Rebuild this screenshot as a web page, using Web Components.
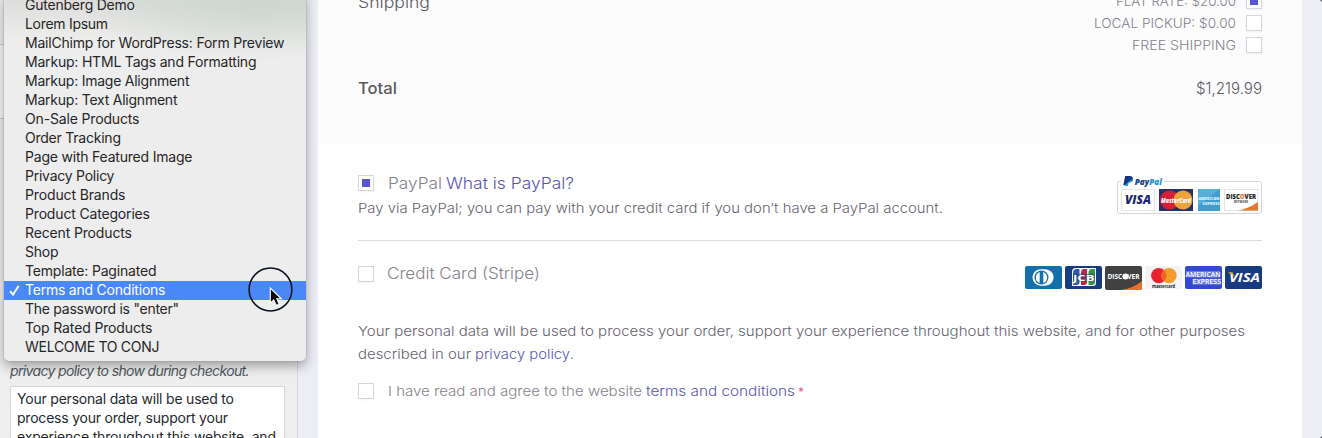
<!DOCTYPE html>
<html lang="en">
<head>
<meta charset="utf-8">
<title>Checkout customizer</title>
<style>
html,body{margin:0;height:100%;overflow:hidden;background:#ededf5}
body{font-family:Inter,sans-serif}
</style>
</head>
<body>
<customizer-app></customizer-app>
<script>
const define=(name,html,setup)=>customElements.define(name,class extends HTMLElement{
  constructor(){super();this.attachShadow({mode:'open'}).innerHTML=html;}
  connectedCallback(){if(setup)setup.call(this,this.shadowRoot);}
});

// A single line of text set to a given width: widened where --stretch is on, tracked otherwise.
define('fit-text','<style>:host{display:inline-block;white-space:pre}span{display:inline-block;transform-origin:0 50%}</style><span><slot></slot></span>',function(root){
  const s=root.querySelector('span'),w=+this.getAttribute('w'),n=this.textContent.length;
  const own=s.getBoundingClientRect().width;
  if(getComputedStyle(this).getPropertyValue('--stretch').trim()==='1')s.style.transform='scaleX('+w/own+')';
  else s.style.letterSpacing=((w-own)/(n-1))+'px';
  this.style.width=w+'px';
});

define('check-box',`<style>
:host{display:block;box-sizing:border-box;width:16px;height:16px;flex:none;border:1px solid #d5d4df;background:#fff;box-shadow:0 1px 2px #0000000d;padding:3px}
i{display:none;width:8px;height:8px;background:#5856d0}
:host([checked]) i{display:block}
</style><i></i>`);

define('menu-item',`<style>
:host{display:flex;align-items:center;height:19px;padding-left:21px;position:relative;font:14px/19px Inter,sans-serif;color:#262628;white-space:pre}
:host([selected]){background:#4a88f7;color:#fff}
svg{display:none;position:absolute;left:5px;top:4px}
:host([selected]) svg{display:block}
fit-text,::slotted(*){margin-top:-2px}
</style><svg width="11" height="11" viewBox="0 0 11 11"><path d="M1 6.2 4 9.6 9.6 1" fill="none" stroke="#fff" stroke-width="1.9"/></svg><slot></slot>`);

const items=[['Gutenberg Demo',110],['Lorem Ipsum',83],['MailChimp for WordPress: Form Preview',259.5],['Markup: HTML Tags and Formatting',231.5],['Markup: Image Alignment',164.5],['Markup: Text Alignment',152.5],['On-Sale Products',114.5],['Order Tracking',96],['Page with Featured Image',167.5],['Privacy Policy',89.5],['Product Brands',100.5],['Product Categories',125],['Recent Products',107],['Shop',33.5],['Template: Paginated',131.5],['Terms and Conditions',140.5],['The password is "enter"',154],['Top Rated Products',127.5],['WELCOME TO CONJ',134.5]];
define('page-menu',`<style>
:host{display:block;box-sizing:border-box;width:302px;height:365px;padding-bottom:4px;overflow:hidden;border-radius:0 0 5px 5px;background:radial-gradient(ellipse 190px 66px at 255px 0,#cbd5cd 0,#cbd5cd00 100%),linear-gradient(#dcdcdb,#ededec 46px,#ededee 70px)}
</style>${items.map(([t,w])=>`<menu-item${t.startsWith('Terms')?' selected':''}><fit-text w="${w}">${t}</fit-text></menu-item>`).join('')}`);

define('mouse-pointer',`<style>:host{display:block;width:46px;height:46px}svg{display:block}</style>
<svg width="46" height="46" viewBox="0 0 46 46"><circle cx="23.500" cy="23.500" r="21.400" fill="none" stroke="#07101f" stroke-width="1.500"/><path d="M23.300 22V37.100L26.700 34 29.400 39.500 32.200 38.200 29.800 32.800H34.300Z" fill="#050505" stroke="#fff" stroke-width="1.100"/></svg>`);

define('side-panel',`<style>
:host{display:flex;flex-direction:column;box-sizing:border-box;width:298px;height:438px;background:#eee;border-right:1px solid #d5d5dc;padding:361px 0 0 10px;position:relative;color:#26292d;font:14px/19px Inter,sans-serif}
em{display:block;color:#50555a;height:19px;margin-bottom:6px}
.area{box-sizing:border-box;width:275px;height:70px;border:1px solid #d8d8d8;background:#fff;padding:2px 6px;white-space:nowrap}
.area div{height:19px}
.control{position:absolute;left:0;top:44px;width:6px;height:75px;box-sizing:border-box;background:#f7f7f7;border:solid #c8c8c8;border-width:1px 0}
page-menu{position:absolute;left:4px;top:-4px;z-index:1}
.shade{position:absolute;left:4px;top:-8px;width:302px;height:369px;border-radius:5px;box-shadow:0 0 1px #0008,0 5px 12px #0005}
mouse-pointer{position:absolute;left:247px;top:266px;z-index:2}
</style><em><fit-text w="239.5">privacy policy to show during checkout.</fit-text></em>
<div class="area"><div><fit-text w="217">Your personal data will be used to</fit-text></div><div><fit-text w="211">process your order, support your</fit-text></div><div><fit-text w="259">experience throughout this website, and</fit-text></div></div>
<div class="control"></div><div class="shade"></div><page-menu></page-menu><mouse-pointer></mouse-pointer>`);

define('paypal-marks',`<style>:host{display:block;width:146px;height:40px}svg{display:block;font-family:"Open Sans",sans-serif;font-weight:800}</style>
<svg width="146" height="40" viewBox="0 0 146 40">
<rect x="1.500" y="6.500" width="144" height="32" rx="2" fill="#fff" stroke="#d4d4d8"/>
<path d="M5 3h43v6H5z" fill="#fff"/>
<path d="M9.200 1h4.200c3 0 4 1.500 3.400 3.600-.5 2-2 2.500-4.400 2.500l-.8 3.100H7.300Z" fill="#12357f"/><path d="M16.900 3.300c1 2.400-.8 4.400-4.300 4.200L11.800 11H9.200l.4-2" fill="#179bd7"/>
<text x="18.800" y="9.500" font-size="8.500" font-style="italic" textLength="27" lengthAdjust="spacingAndGlyphs" fill="#1d3d85">Pay<tspan fill="#2394cf">Pal</tspan></text>
<path d="M5.500 14.500h33v21h-33zM108.500 14.500h33.500v21h-33.500z" fill="#fff" stroke="#e4e4e7"/>
<text x="9" y="29" font-size="11.500" font-style="italic" textLength="26" lengthAdjust="spacingAndGlyphs" fill="#1b2672">VISA</text>
<path d="M43 14h34v22H43z" fill="#273168"/><circle cx="53.600" cy="25" r="9.500" fill="#d51f32"/><circle cx="67" cy="25" r="9.500" fill="#eda23b"/>
<text x="45" y="27.500" font-size="7.500" font-style="italic" textLength="30" lengthAdjust="spacingAndGlyphs" fill="#fff">MasterCard</text>
<path d="M82 14h22v22H82z" fill="#429dcd"/><path d="M82 14h22L82 31z" fill="#68b9dd" opacity=".6"/>
<text x="82.500" y="24.800" font-size="3.800" textLength="21" lengthAdjust="spacingAndGlyphs" fill="#e0f2fa">AMERICAN</text><text x="86.500" y="30.300" font-size="3.800" textLength="17" lengthAdjust="spacingAndGlyphs" fill="#e0f2fa">EXPRESS</text>
<path d="M122 35.500q11-2 20-8.500v8.500z" fill="#e57831"/>
<text x="110" y="23.500" font-size="6.500" textLength="30" lengthAdjust="spacingAndGlyphs" fill="#222">DISC<tspan fill="#eb7732">O</tspan>VER</text>
<text x="118" y="28.300" font-size="2.500" textLength="14" fill="#555">NETWORK</text>
</svg>`);

define('card-marks',`<style>:host{display:block;width:238px;height:25px}svg{display:block;font-family:"Open Sans",sans-serif;font-weight:700}</style>
<svg width="238" height="25" viewBox="0 0 238 25">
<rect x="1" y="1" width="37" height="23" rx="2" fill="#1271ad"/><path d="M17.500 4.300h3c12 0 12 16.400 0 16.400h-3C5.500 20.700 5.500 4.300 17.500 4.300Z" fill="#fff"/><circle cx="17.500" cy="12.500" r="7" fill="#1271ad"/><path d="M15.700 6.900a6 6 0 0 0 0 11.200zM19.300 6.900a6 6 0 0 1 0 11.200z" fill="#fff"/>
<rect x="41" y="1" width="37" height="23" rx="2" fill="#173d80"/><path d="M52 3h20v15q0 3-3 3H48V7q0-4 4-4z" fill="#fff"/><path d="M53 4h2.500v13q0 3-3 3H49V8q0-4 4-4z" fill="#285db0"/><path d="M60 4h3v13q0 3-3 3h-3V8q0-4 3-4z" fill="#bd2747"/><path d="M67.500 4H71v13q0 3-3 3h-3.500V8q0-4 3-4z" fill="#35964a"/><path d="M49 8.500h22v8H49z" fill="#173d80" opacity=".45"/>
<text x="49" y="15.800" font-size="9" fill="#fff" textLength="21.500" lengthAdjust="spacingAndGlyphs">JCB</text>
<rect x="81" y="1" width="37" height="24" rx="2" fill="#414142"/><path d="M97 25q13-2 21-9v7q0 2-2 2z" fill="#e96f2f"/><text x="83.500" y="14.200" font-size="7.500" fill="#fff" textLength="32" lengthAdjust="spacingAndGlyphs">DISCOVER</text><circle cx="101.500" cy="11.500" r="2.900" fill="#fff"/>
<rect x="121" y="1" width="37" height="23" rx="2" fill="#f3f3f4"/><circle cx="134.800" cy="10.600" r="7.700" fill="#e7222e"/><circle cx="145" cy="10.600" r="7.700" fill="#f39b2d"/><path d="M139.900 4.800a7.700 7.700 0 0 1 0 11.600 7.700 7.700 0 0 1 0-11.600z" fill="#f16324"/><text x="128" y="22.500" font-size="4.700" fill="#222" textLength="23" lengthAdjust="spacingAndGlyphs">mastercard</text>
<rect x="161" y="1" width="37" height="23" rx="2" fill="#3448d0"/><path d="M162 6h34v6.500h-34zM168.500 13.800H197v6h-28.500z" fill="#fff" opacity=".28"/><g fill="#fff" font-weight="600"><text x="161.500" y="11.700" font-size="7" textLength="35" lengthAdjust="spacingAndGlyphs">AMERICAN</text><text x="168.500" y="19.300" font-size="7" textLength="28.500" lengthAdjust="spacingAndGlyphs">EXPRESS</text></g>
<rect x="201" y="1" width="37" height="23" rx="2" fill="#173a80"/><text x="205" y="17.300" font-size="13" font-style="italic" fill="#fff" textLength="31" lengthAdjust="spacingAndGlyphs">VISA</text><path d="M204.500 7.200h4l2.500 5q-2-3-6.500-4.300z" fill="#e5a23e"/>
</svg>`);

define('order-review',`<style>
:host{display:block;box-sizing:border-box;height:144px;padding:0 40px;background:#fcfcfd;border-bottom:1px solid #f9f9fb;color:#5b5863;font-size:15.500px}
.ship{display:flex;justify-content:space-between;height:55px}
.name{margin-top:-9px;line-height:23px}
.opts{margin-top:-10px}
.opt{display:flex;align-items:center;justify-content:flex-end;gap:10px;height:22px;font-size:13.500px;color:#85828c}
.opt fit-text{margin-top:-1px}
.total{display:flex;justify-content:space-between;line-height:22px;margin-top:23px}
b{font-weight:500}
</style><div class="ship"><div class="name"><fit-text w="72">Shipping</fit-text></div><div class="opts">
<div class="opt"><fit-text w="120">FLAT RATE: $20.00</fit-text><check-box checked></check-box></div>
<div class="opt"><fit-text w="142">LOCAL PICKUP: $0.00</fit-text><check-box></check-box></div>
<div class="opt"><fit-text w="104">FREE SHIPPING</fit-text><check-box></check-box></div></div></div>
<div class="total"><b><fit-text w="39">Total</fit-text></b><fit-text w="66">$1,219.99</fit-text></div>`);

define('pay-method',`<style>
:host{display:block}
.row{display:flex;justify-content:space-between}
.label{display:flex;align-items:center;gap:14px;height:22px;font-size:15.500px;color:#85828c}
.label span{margin-top:var(--label-shift,-1px)}
p{margin:0;height:26px;line-height:28px;font-size:13.500px;color:#66636e}
.text{min-width:0}
</style><div class="row"><div class="text"><div class="label"><slot name="box"></slot><span><slot name="label"></slot></span></div><p><slot name="text"></slot></p></div><slot name="marks"></slot></div>`);

define('checkout-page',`<style>
:host{display:block;width:984px;height:438px;background:#fff;color:#66636e;font-weight:350;--stretch:1}
a{color:#5955b5;text-decoration:none}
.pay{padding:0 40px}
.pp{padding-top:28px;height:68px;border-bottom:1px solid #dcdae5;--label-shift:1px}
.pp paypal-marks{margin:3px 0 0 0}
.cc{padding-top:22px;height:57px}
.cc card-marks{margin-top:2px}
.cc fit-text{margin-left:-1px}
.privacy{font-size:13.500px;line-height:23px;white-space:nowrap}
.agree{display:flex;align-items:center;gap:14px;height:22px;margin-top:14px;font-size:13.500px;color:#85828c;white-space:nowrap}
sup{font-size:12px;color:#e4405f;line-height:0;vertical-align:0;margin-left:3px}
</style><order-review></order-review><div class="pay">
<div class="pp"><pay-method><check-box slot="box" checked></check-box><span slot="label"><fit-text w="54">PayPal</fit-text><a style="margin-left:4px"><fit-text w="128">What is PayPal?</fit-text></a></span><fit-text slot="text" w="585">Pay via PayPal; you can pay with your credit card if you don’t have a PayPal account.</fit-text><paypal-marks slot="marks"></paypal-marks></pay-method></div>
<div class="cc"><pay-method><check-box slot="box"></check-box><fit-text slot="label" w="153">Credit Card (Stripe)</fit-text><card-marks slot="marks"></card-marks></pay-method></div>
<div class="privacy"><fit-text w="887">Your personal data will be used to process your order, support your experience throughout this website, and for other purposes</fit-text><br><fit-text w="113">described in our</fit-text><a style="margin-left:4px"><fit-text w="95">privacy policy</fit-text></a>.</div>
<div class="agree"><check-box></check-box><span><fit-text w="254">I have read and agree to the website</fit-text><a style="margin-left:4px"><fit-text w="149">terms and conditions</fit-text></a><sup>*</sup></span></div>
</div>`);

define('customizer-app',`<style>
:host{display:flex;gap:20px;width:1322px;height:438px;overflow:hidden;background:#ededf5;position:relative}
side-panel{flex:none;z-index:1}
checkout-page{flex:none}
.corner{position:absolute;right:0;width:2px;height:2px;background:#55555c}
.corner.t{top:0;clip-path:polygon(0 0,100% 0,100% 100%)}
.corner.b{bottom:0;clip-path:polygon(100% 0,100% 100%,0 100%)}
</style><side-panel></side-panel><checkout-page></checkout-page><div class="corner t"></div><div class="corner b"></div>`);
</script>
</body>
</html>
